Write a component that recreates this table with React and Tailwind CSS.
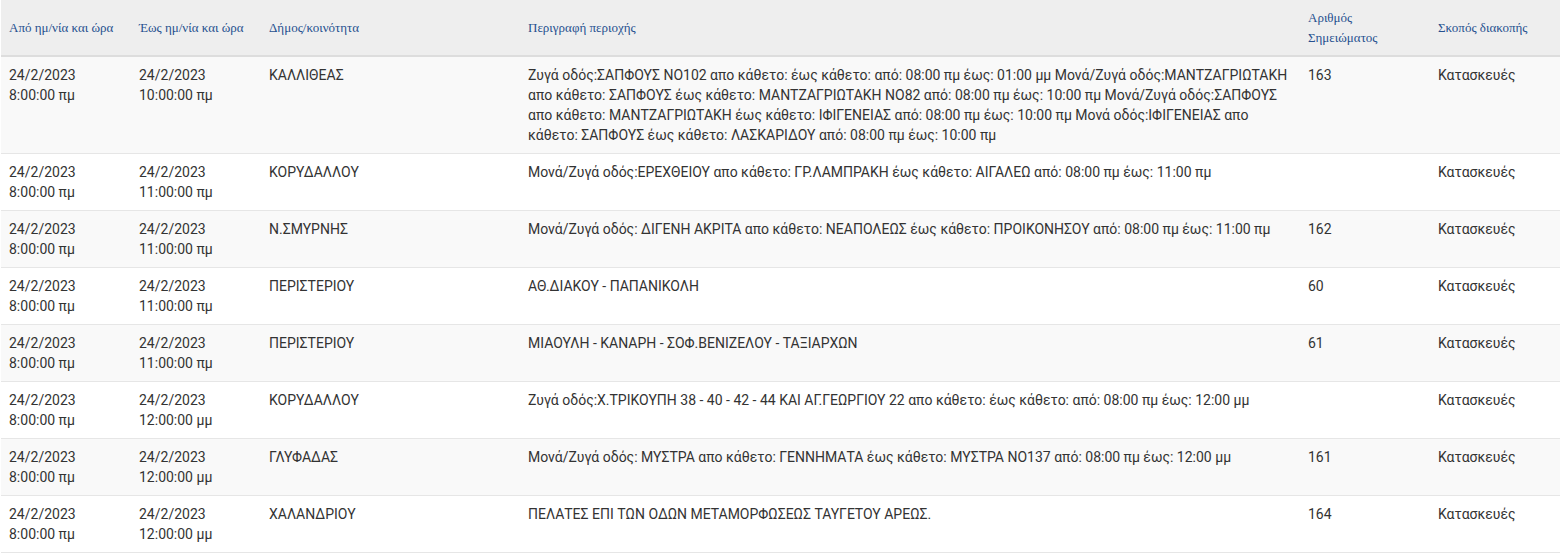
const rows = [
  {
    from: ['24/2/2023', '8:00:00 πμ'],
    to: ['24/2/2023', '10:00:00 πμ'],
    area: 'ΚΑΛΛΙΘΕΑΣ',
    desc: 'Ζυγά οδός:ΣΑΠΦΟΥΣ ΝΟ102 απο κάθετο: έως κάθετο: από: 08:00 πμ έως: 01:00 μμ Μονά/Ζυγά οδός:ΜΑΝΤΖΑΓΡΙΩΤΑΚΗ απο κάθετο: ΣΑΠΦΟΥΣ έως κάθετο: ΜΑΝΤΖΑΓΡΙΩΤΑΚΗ ΝΟ82 από: 08:00 πμ έως: 10:00 πμ Μονά/Ζυγά οδός:ΣΑΠΦΟΥΣ απο κάθετο: ΜΑΝΤΖΑΓΡΙΩΤΑΚΗ έως κάθετο: ΙΦΙΓΕΝΕΙΑΣ από: 08:00 πμ έως: 10:00 πμ Μονά οδός:ΙΦΙΓΕΝΕΙΑΣ απο κάθετο: ΣΑΠΦΟΥΣ έως κάθετο: ΛΑΣΚΑΡΙΔΟΥ από: 08:00 πμ έως: 10:00 πμ',
    num: '163',
  },
  {
    from: ['24/2/2023', '8:00:00 πμ'],
    to: ['24/2/2023', '11:00:00 πμ'],
    area: 'ΚΟΡΥΔΑΛΛΟΥ',
    desc: 'Μονά/Ζυγά οδός:ΕΡΕΧΘΕΙΟΥ απο κάθετο: ΓΡ.ΛΑΜΠΡΑΚΗ έως κάθετο: ΑΙΓΑΛΕΩ από: 08:00 πμ έως: 11:00 πμ',
    num: '',
  },
  {
    from: ['24/2/2023', '8:00:00 πμ'],
    to: ['24/2/2023', '11:00:00 πμ'],
    area: 'Ν.ΣΜΥΡΝΗΣ',
    desc: 'Μονά/Ζυγά οδός: ΔΙΓΕΝΗ ΑΚΡΙΤΑ απο κάθετο: ΝΕΑΠΟΛΕΩΣ έως κάθετο: ΠΡΟΙΚΟΝΗΣΟΥ από: 08:00 πμ έως: 11:00 πμ',
    num: '162',
  },
  {
    from: ['24/2/2023', '8:00:00 πμ'],
    to: ['24/2/2023', '11:00:00 πμ'],
    area: 'ΠΕΡΙΣΤΕΡΙΟΥ',
    desc: 'ΑΘ.ΔΙΑΚΟΥ - ΠΑΠΑΝΙΚΟΛΗ',
    num: '60',
  },
  {
    from: ['24/2/2023', '8:00:00 πμ'],
    to: ['24/2/2023', '11:00:00 πμ'],
    area: 'ΠΕΡΙΣΤΕΡΙΟΥ',
    desc: 'ΜΙΑΟΥΛΗ - ΚΑΝΑΡΗ - ΣΟΦ.ΒΕΝΙΖΕΛΟΥ - ΤΑΞΙΑΡΧΩΝ',
    num: '61',
  },
  {
    from: ['24/2/2023', '8:00:00 πμ'],
    to: ['24/2/2023', '12:00:00 μμ'],
    area: 'ΚΟΡΥΔΑΛΛΟΥ',
    desc: 'Ζυγά οδός:Χ.ΤΡΙΚΟΥΠΗ 38 - 40 - 42 - 44 ΚΑΙ ΑΓ.ΓΕΩΡΓΙΟΥ 22 απο κάθετο: έως κάθετο: από: 08:00 πμ έως: 12:00 μμ',
    num: '',
  },
  {
    from: ['24/2/2023', '8:00:00 πμ'],
    to: ['24/2/2023', '12:00:00 μμ'],
    area: 'ΓΛΥΦΑΔΑΣ',
    desc: 'Μονά/Ζυγά οδός: ΜΥΣΤΡΑ απο κάθετο: ΓΕΝΝΗΜΑΤΑ έως κάθετο: ΜΥΣΤΡΑ ΝΟ137 από: 08:00 πμ έως: 12:00 μμ',
    num: '161',
  },
  {
    from: ['24/2/2023', '8:00:00 πμ'],
    to: ['24/2/2023', '12:00:00 μμ'],
    area: 'ΧΑΛΑΝΔΡΙΟΥ',
    desc: 'ΠΕΛΑΤΕΣ ΕΠΙ ΤΩΝ ΟΔΩΝ ΜΕΤΑΜΟΡΦΩΣΕΩΣ ΤΑΥΓΕΤΟΥ ΑΡΕΩΣ.',
    num: '164',
  },
]

const th = 'px-2 py-2 text-left align-middle font-normal text-[13px] leading-[19.5px] text-[#26508f] border-b-2 border-[#dddddd]'
const td = 'px-2 pt-2 pb-2 align-top border-b border-[#e6e6e6]'

export default function App() {
  return (
    <div className="w-[1560px] bg-white pl-px">
      <table className="w-full table-fixed border-separate border-spacing-0 text-[14px] leading-5 text-[#333333]" style={{ fontFamily: 'Roboto, "Noto Sans", sans-serif' }}>
        <colgroup>
          <col className="w-[130px]" />
          <col className="w-[130px]" />
          <col className="w-[259px]" />
          <col className="w-[780px]" />
          <col className="w-[130px]" />
          <col />
        </colgroup>
        <thead>
          <tr className="bg-[#eeeeee]" style={{ fontFamily: '"Liberation Serif", "Times New Roman", serif' }}>
            <th className={th}>Από ημ/νία και ώρα</th>
            <th className={th}>Έως ημ/νία και ώρα</th>
            <th className={th}>Δήμος/κοινότητα</th>
            <th className={th}>Περιγραφή περιοχής</th>
            <th className={th}>Αριθμός Σημειώματος</th>
            <th className={th}>Σκοπός διακοπής</th>
          </tr>
        </thead>
        <tbody>
          {rows.map((r, i) => (
            <tr key={i} className={i % 2 === 0 ? 'bg-[#f9f9f9]' : 'bg-white'}>
              <td className={td}>{r.from[0]}<br />{r.from[1]}</td>
              <td className={td}>{r.to[0]}<br />{r.to[1]}</td>
              <td className={td}>{r.area}</td>
              <td className={td}>{r.desc}</td>
              <td className={td}>{r.num}</td>
              <td className={td}>Κατασκευές</td>
            </tr>
          ))}
        </tbody>
      </table>
    </div>
  )
}
